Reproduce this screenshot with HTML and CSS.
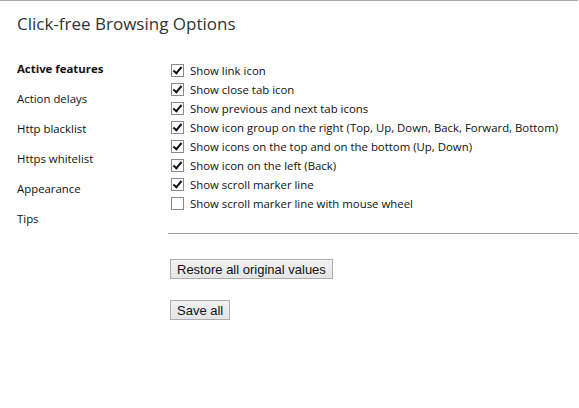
FILE: index.html
```html
<!DOCTYPE html>
<html>
<head>
<meta charset="utf-8">
<link rel="stylesheet" href="styles.css">
</head>
<body>
<div class="page">
  <h1 class="title">Click-free Browsing Options</h1>
  <div class="main">
    <ul class="nav">
      <li class="nav-item active">Active features</li>
      <li class="nav-item">Action delays</li>
      <li class="nav-item">Http blacklist</li>
      <li class="nav-item">Https whitelist</li>
      <li class="nav-item">Appearance</li>
      <li class="nav-item">Tips</li>
    </ul>
    <div class="content">
      <div class="options">
        <label class="opt"><span class="box checked"></span>Show link icon</label>
        <label class="opt"><span class="box checked"></span>Show close tab icon</label>
        <label class="opt"><span class="box checked"></span>Show previous and next tab icons</label>
        <label class="opt"><span class="box checked"></span>Show icon group on the right (Top, Up, Down, Back, Forward, Bottom)</label>
        <label class="opt"><span class="box checked"></span>Show icons on the top and on the bottom (Up, Down)</label>
        <label class="opt"><span class="box checked"></span>Show icon on the left (Back)</label>
        <label class="opt"><span class="box checked"></span>Show scroll marker line</label>
        <label class="opt"><span class="box"></span>Show scroll marker line with mouse wheel</label>
      </div>
      <div class="rule"></div>
      <div class="buttons">
        <button class="btn">Restore all original values</button>
        <button class="btn">Save all</button>
      </div>
    </div>
  </div>
</div>
</body>
</html>
```
FILE: styles.css
```css
html, body {
  margin: 0;
  padding: 0;
  background: #fff;
}
.page {
  border-top: 1px solid #a9a9a9;
  margin-right: 1px;
  height: 407px;
  font-family: "Open Sans", sans-serif;
  color: #222;
}
.title {
  margin: 0;
  padding: 11px 0 0 17px;
  font-size: 17px;
  font-weight: normal;
  color: #333;
  line-height: 24px;
}
.main {
  display: flex;
  margin-top: 25px;
}
.nav {
  list-style: none;
  margin: 0;
  padding: 0 0 0 17px;
  width: 151px;
  flex: none;
}
.nav-item {
  font-size: 11.4px;
  line-height: 30px;
  color: #111;
}
.nav-item.active {
  font-weight: bold;
  margin-top: -7px;
}
.content {
  flex: 1;
}
.options {
  display: flex;
  flex-direction: column;
  padding-left: 3px;
}
.opt {
  display: flex;
  align-items: center;
  height: 19px;
  font-size: 11.4px;
  color: #111;
}
.box {
  width: 11px;
  height: 11px;
  border: 1px solid #8a8a8a;
  background: #fff;
  margin-right: 6px;
  position: relative;
  flex: none;
}
.box.checked::after {
  content: "";
  position: absolute;
  left: 3px;
  top: 0px;
  width: 3px;
  height: 7px;
  border-right: 2px solid #111;
  border-bottom: 2px solid #111;
  transform: rotate(40deg);
}
.rule {
  border-top: 1px solid #9a9a9a;
  margin-top: 20px;
}
.buttons {
  display: flex;
  flex-direction: column;
  align-items: flex-start;
  gap: 21px;
  padding: 25px 0 0 2px;
}
.btn {
  font-family: "Liberation Sans", Arial, sans-serif;
  font-size: 13px;
  color: #111;
  height: 20px;
  padding: 0 6px;
  border: 1px solid #adadad;
  background: linear-gradient(#f2f2f2, #e4e4e4);
  border-radius: 0;
}
```
